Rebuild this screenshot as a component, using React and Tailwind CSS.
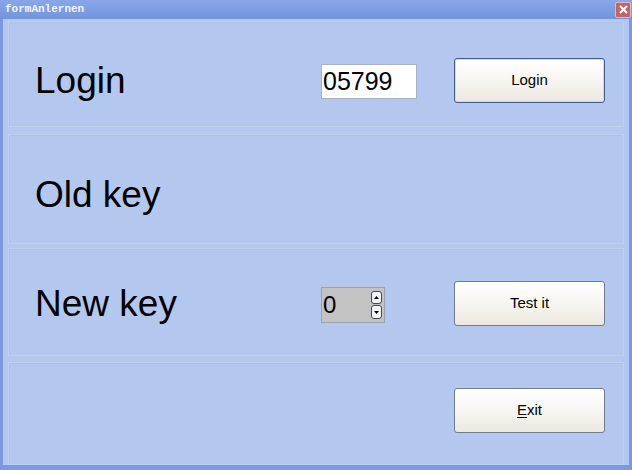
import React from 'react';

const FONT = { fontFamily: '"Liberation Sans", Arial, sans-serif' };

const WinButton = ({ children, isDefault = false, className = '' }) => (
  <button
    className={`w-[151px] h-[45px] rounded-[3px] border bg-gradient-to-b from-[#ffffff] via-[#f7f6f2] to-[#ebe8df] text-[15px] text-black ${
      isDefault ? 'border-[#3f5e96] shadow-[inset_0_0_0_1px_#c9d8f5]' : 'border-[#707c8c]'
    } ${className}`}
  >
    {children}
  </button>
);

const Panel = ({ top, height, children }) => (
  <div
    className={`relative mx-[5px] border border-[#bfcfee] shadow-[inset_1px_1px_0_#adc1e7] ${top} ${height}`}
  >
    {children}
  </div>
);

const Spinner = () => (
  <div className="absolute left-[312px] top-[38px] w-[64px] h-[36px] bg-[#c3c3c3] border border-[#9aa3ad] flex items-center">
    <span className="pl-[1px] text-[24px] leading-none text-black">0</span>
    <div className="ml-auto mr-[2px] flex flex-col gap-[1px]">
      <span className="w-[11px] h-[13px] bg-[#f4f4f4] border border-[#3d4a5a] rounded-[3px] flex items-center justify-center">
        <svg width="5" height="3" viewBox="0 0 5 3"><path d="M0 3 L2.5 0 L5 3 Z" fill="#000" /></svg>
      </span>
      <span className="w-[11px] h-[14px] bg-[#f4f4f4] border border-[#3d4a5a] rounded-[3px] flex items-center justify-center">
        <svg width="5" height="3" viewBox="0 0 5 3"><path d="M0 0 L2.5 3 L5 0 Z" fill="#000" /></svg>
      </span>
    </div>
  </div>
);

export default function App() {
  return (
    <div className="w-[632px] h-[470px] flex flex-col bg-[#b4c8ef] overflow-hidden" style={FONT}>
      {/* title bar */}
      <div className="h-[20px] flex items-center justify-between bg-gradient-to-b from-[#8aa8e8] to-[#7194dd] px-[5px]">
        <span className="text-[11px] font-bold text-[#f2f5ff]" style={{ fontFamily: '"Liberation Mono", "DejaVu Sans Mono", monospace' }}>
          formAnlernen
        </span>
        <span className="w-[16px] h-[16px] -mr-[4px] bg-[#c26566] border border-[#e3b9bd] rounded-[2px] flex items-center justify-center">
          <svg width="9" height="9" viewBox="0 0 9 9">
            <path d="M1 1 L8 8 M8 1 L1 8" stroke="#fff" strokeWidth="2" />
          </svg>
        </span>
      </div>

      {/* body */}
      <div className="flex-1 flex flex-col border-l-[3px] border-r-[3px] border-b-[5px] border-[#7b99de]">
        <Panel top="mt-[2px]" height="h-[106px]">
          <span className="absolute left-[26px] top-[40px] text-[37px] leading-none text-black">Login</span>
          <div className="absolute left-[312px] top-[42px] w-[96px] h-[35px] bg-white border border-[#a7b3c2] flex items-center">
            <span className="pl-[1px] text-[25px] leading-none text-black">05799</span>
          </div>
          <div className="absolute left-[445px] top-[36px]">
            <WinButton isDefault>Login</WinButton>
          </div>
        </Panel>

        <Panel top="mt-[7px]" height="h-[110px]">
          <span className="absolute left-[26px] top-[41px] text-[37px] leading-none text-black">Old key</span>
        </Panel>

        <Panel top="mt-[4px]" height="h-[108px]">
          <span className="absolute left-[26px] top-[36px] text-[37px] leading-none text-black">New key</span>
          <Spinner />
          <div className="absolute left-[445px] top-[32px]">
            <WinButton>Test it</WinButton>
          </div>
        </Panel>

        <Panel top="mt-[6px]" height="h-[103px]">
          <div className="absolute left-[445px] top-[25px]">
            <WinButton>
              <span className="underline underline-offset-2">E</span>xit
            </WinButton>
          </div>
        </Panel>
      </div>
    </div>
  );
}
